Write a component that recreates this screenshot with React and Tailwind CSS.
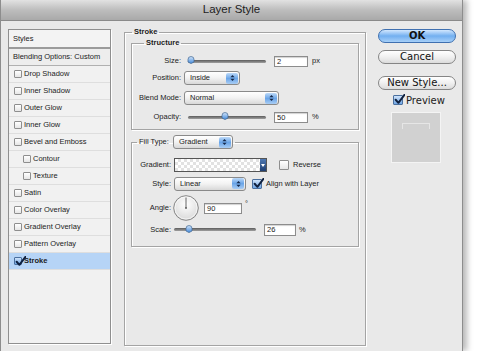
import React from 'react';

function Box({ checked = false, size = 'small' }) {
    const dim = size === 'small' ? 'w-[8px] h-[8px]' : 'w-[10px] h-[10px]';
    if (!checked) {
        return <div className={`${dim} shrink-0 rounded-[1px] border border-[#8e8e8e] bg-gradient-to-b from-white to-[#e6e6e6]`}></div>;
    }
    return (
        <div className={`${dim} relative shrink-0 rounded-[1px] border border-[#4a6f9e] bg-gradient-to-b from-[#cfe3fa] to-[#6fa5e4]`}>
            <svg viewBox="0 0 10 10" className="absolute -top-[2px] left-0 h-[11px] w-[11px]">
                <path d="M1.5 5.2 L4 8 L9.5 0.8" fill="none" stroke="#10213f" strokeWidth="1.8" strokeLinecap="round" strokeLinejoin="round" />
            </svg>
        </div>
    );
}

function Thumb() {
    return (
        <svg viewBox="0 0 8 8" className="h-[8px] w-[8px]">
            <defs>
                <linearGradient id="tg" x1="0" y1="0" x2="0" y2="1">
                    <stop offset="0" stopColor="#d6e8fc" />
                    <stop offset="1" stopColor="#3f86d8" />
                </linearGradient>
            </defs>
            <path d="M1 3.5 Q1 0.5 4 0.5 Q7 0.5 7 3.5 V6 L4 7.6 L1 6 Z" fill="url(#tg)" stroke="#41668f" strokeWidth="0.7" />
        </svg>
    );
}

function Slider({ width, pos }) {
    return (
        <div className={`relative flex h-[12px] items-center ${width}`}>
            <div className="h-[3px] w-full rounded-full bg-gradient-to-b from-[#5c5c5c] to-[#a0a0a0]"></div>
            <div className="absolute top-[1px]" style={{ left: pos }}>
                <Thumb />
            </div>
        </div>
    );
}

function Arrows() {
    return (
        <svg viewBox="0 0 6 9" className="h-[8px] w-[5px]">
            <path d="M0.5 3.5 L3 0.8 L5.5 3.5 Z" fill="#15284a" />
            <path d="M0.5 5.5 L3 8.2 L5.5 5.5 Z" fill="#15284a" />
        </svg>
    );
}

function Popup({ width, value }) {
    return (
        <div className={`flex h-[14px] ${width} shrink-0 items-center rounded-[3px] border border-[#8a8a8a] bg-gradient-to-b from-white via-[#f2f2f2] to-[#d8d8d8] pl-[5px] text-[7.5px] leading-none`}>
            <span className="flex-1">{value}</span>
            <div className="mr-[1px] flex h-[11px] w-[12px] items-center justify-center rounded-[2px] bg-gradient-to-b from-[#bcd9f8] via-[#6aa5e8] to-[#a9cdf4]">
                <Arrows />
            </div>
        </div>
    );
}

function Field({ width, height = 'h-[11px]', value }) {
    return (
        <div className={`${width} ${height} shrink-0 border border-[#8c8c8c] bg-white pl-[2px] text-[7.5px] leading-[10px] shadow-[inset_0_1px_1px_rgba(0,0,0,0.18)]`}>
            {value}
        </div>
    );
}

function StyleRow({ label, checked = false, indent = false, active = false }) {
    return (
        <div className={`flex h-[17px] items-center gap-[2px] border-b border-[#dedede] ${indent ? 'pl-[14px]' : 'pl-[5px]'} ${active ? 'bg-[#b6d4f6] font-bold' : ''}`}>
            <Box checked={checked} />
            <span>{label}</span>
        </div>
    );
}

export default function App() {
    const styles = [
        ['Drop Shadow'],
        ['Inner Shadow'],
        ['Outer Glow'],
        ['Inner Glow'],
        ['Bevel and Emboss'],
        ['Contour', true],
        ['Texture', true],
        ['Satin'],
        ['Color Overlay'],
        ['Gradient Overlay'],
        ['Pattern Overlay'],
    ];

    return (
        <div className="h-[351px] w-[478px] overflow-hidden bg-white font-['Liberation_Sans',Arial,sans-serif] text-[#1c1c1c]">
            <div className="h-[351px] w-[463px] border-l border-r border-[#8d8d8d] bg-[#e9e9e9] shadow-[4px_0_6px_rgba(0,0,0,0.28)]">
                {/* Title bar */}
                <div className="flex h-[21px] items-center justify-center border-b border-[#8a8a8a] bg-gradient-to-b from-[#e2e2e2] via-[#bdbdbd] to-[#a9a9a9] text-[11.5px] text-[#222]">
                    Layer Style
                </div>

                <div className="flex items-start pl-[7px]">
                    {/* Styles list */}
                    <div className="mt-[8px] h-[315px] w-[103px] border border-[#8f8f8f] bg-[#f1f1f1] text-[7.5px] shadow-[1px_1px_0_#fff]">
                        <div className="flex h-[19px] items-center border-b-2 border-[#9b9b9b] bg-[#f3f3f3] pl-[4px]">Styles</div>
                        <div className="flex h-[17px] items-center border-b border-[#b0b0b0] bg-[#ededed] pl-[4px]">Blending Options: Custom</div>
                        {styles.map(([label, indent]) => (
                            <StyleRow key={label} label={label} indent={indent} />
                        ))}
                        <StyleRow label="Stroke" checked active />
                    </div>

                    {/* Stroke group */}
                    <fieldset className="ml-[13px] mt-[6px] h-[319px] w-[242px] border border-[#a4a4a4] p-0 shadow-[inset_1px_1px_0_#fff,1px_1px_0_#fff] text-[7.5px]">
                        <legend className="ml-[7px] px-[2px] font-bold leading-[10px]">Stroke</legend>
                        <div className="px-[6px] pt-[1px]">
                            {/* Structure */}
                            <fieldset className="w-[228px] border border-[#a4a4a4] p-0 pb-[5px] shadow-[inset_1px_1px_0_#fff,1px_1px_0_#fff]">
                                <legend className="ml-[12px] px-[2px] font-bold leading-[10px]">Structure</legend>
                                <div className="mt-[6px] flex h-[14px] items-center gap-[3px]">
                                    <span className="w-[49px] text-right">Size:</span>
                                    <div className="ml-[4px]"><Slider width="w-[78px]" pos="-1px" /></div>
                                    <div className="ml-[5px]"><Field width="w-[34px]" value="2" /></div>
                                    <span className="ml-[1px]">px</span>
                                </div>
                                <div className="mt-[3px] flex h-[14px] items-center gap-[3px]">
                                    <span className="w-[49px] text-right">Position:</span>
                                    <Popup width="w-[56px]" value="Inside" />
                                </div>
                                <div className="mt-[6px] flex h-[14px] items-center gap-[3px]">
                                    <span className="w-[49px] text-right">Blend Mode:</span>
                                    <Popup width="w-[95px]" value="Normal" />
                                </div>
                                <div className="mt-[5px] flex h-[14px] items-center gap-[3px]">
                                    <span className="w-[49px] text-right">Opacity:</span>
                                    <div className="ml-[4px]"><Slider width="w-[78px]" pos="33px" /></div>
                                    <div className="ml-[5px]"><Field width="w-[34px]" value="50" /></div>
                                    <span className="ml-[1px]">%</span>
                                </div>
                            </fieldset>

                            {/* Fill type */}
                            <fieldset className="mt-[5px] w-[228px] border border-[#a4a4a4] p-0 pb-[10px] shadow-[inset_1px_1px_0_#fff,1px_1px_0_#fff]">
                                <legend className="ml-[5px] flex items-center gap-[4px] px-[2px] leading-[14px]">
                                    <span>Fill Type:</span>
                                    <Popup width="w-[60px]" value="Gradient" />
                                </legend>
                                <div className="mt-[9px] flex h-[14px] items-center gap-[3px]">
                                    <span className="w-[39px] text-right">Gradient:</span>
                                    <div className="flex h-[14px] w-[93px] border border-[#555]">
                                        <div className="flex-1 bg-[repeating-conic-gradient(#e2e2e2_0%_25%,#ffffff_0%_50%)] bg-[length:6px_6px]"></div>
                                        <div className="flex w-[6px] items-center justify-center bg-gradient-to-b from-[#4f79b3] to-[#1f3f72]">
                                            <svg viewBox="0 0 4 3" className="h-[3px] w-[4px]"><path d="M0 0 H4 L2 3 Z" fill="#fff" /></svg>
                                        </div>
                                    </div>
                                    <div className="ml-[9px]"><Box size="large" /></div>
                                    <span className="ml-[1px]">Reverse</span>
                                </div>
                                <div className="mt-[5px] flex h-[13px] items-center gap-[3px]">
                                    <span className="w-[39px] text-right">Style:</span>
                                    <Popup width="w-[72px]" value="Linear" />
                                    <div className="ml-[3px]"><Box checked size="large" /></div>
                                    <span className="ml-[1px]">Align with Layer</span>
                                </div>
                                <div className="mt-[5px] flex h-[26px] items-center gap-[3px]">
                                    <span className="w-[39px] text-right">Angle:</span>
                                    <svg viewBox="0 0 26 26" className="ml-[-1px] h-[26px] w-[26px]">
                                        <defs>
                                            <radialGradient id="dial" cx="0.5" cy="0.35" r="0.7">
                                                <stop offset="0" stopColor="#ffffff" />
                                                <stop offset="1" stopColor="#d6d6d6" />
                                            </radialGradient>
                                        </defs>
                                        <circle cx="13" cy="13" r="12.3" fill="url(#dial)" stroke="#7c7c7c" strokeWidth="0.9" />
                                        <circle cx="13" cy="13" r="11" fill="none" stroke="#fff" strokeWidth="0.6" />
                                        <line x1="13" y1="13" x2="13" y2="2.5" stroke="#555" strokeWidth="0.9" />
                                        <circle cx="13" cy="13" r="0.9" fill="#555" />
                                    </svg>
                                    <div className="ml-[2px]"><Field width="w-[38px]" value="90" /></div>
                                    <span className="-mt-[8px]">°</span>
                                </div>
                                <div className="mt-[2px] flex h-[13px] items-center gap-[3px]">
                                    <span className="w-[39px] text-right">Scale:</span>
                                    <Slider width="w-[82px]" pos="11px" />
                                    <div className="ml-[5px]"><Field width="w-[32px]" height="h-[12px]" value="26" /></div>
                                    <span>%</span>
                                </div>
                            </fieldset>
                        </div>
                    </fieldset>

                    {/* Buttons */}
                    <div className="ml-[12px] flex w-[78px] flex-col font-['DejaVu_Sans',sans-serif]">
                        <button className="mt-[8px] h-[14px] rounded-full border border-[#3f70b0] bg-gradient-to-b from-[#d2e7fd] via-[#72aff0] to-[#a7d0f8] text-[10px] font-bold leading-none text-[#111]">OK</button>
                        <button className="mt-[7px] h-[14px] rounded-full border border-[#858585] bg-gradient-to-b from-white via-[#f0f0f0] to-[#dcdcdc] text-[10px] leading-none text-[#111]">Cancel</button>
                        <button className="mt-[12px] h-[14px] rounded-full border border-[#858585] bg-gradient-to-b from-white via-[#f0f0f0] to-[#dcdcdc] text-[10px] leading-none text-[#111]">New Style...</button>
                        <div className="ml-[15px] mt-[5px] flex h-[10px] items-center gap-[3px] text-[10px]">
                            <Box checked size="large" />
                            <span>Preview</span>
                        </div>
                        <div className="ml-[13px] mt-[7px] flex h-[51px] w-[50px] justify-center border border-[#f4f4f4] bg-[#d1d1d1] pt-[10px]">
                            <div className="h-[6px] w-[28px] rounded-t-[1px] border border-b-0 border-[#e6e6e6]"></div>
                        </div>
                    </div>
                </div>
            </div>
        </div>
    );
}
